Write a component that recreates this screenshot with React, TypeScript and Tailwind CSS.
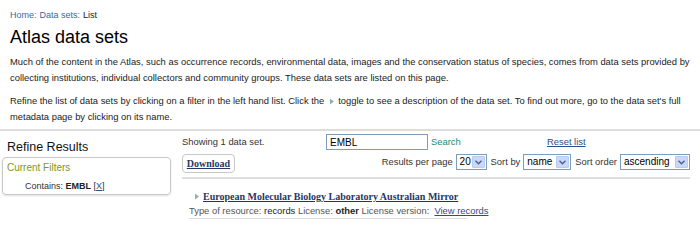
function FakeSelect({ value, width }: { value: string; width: string }) {
  return (
    <div className={`flex h-[16px] items-center justify-between border border-[#7f9db9] bg-white pl-[3px] pr-px ${width}`}>
      <span className="text-[10px] leading-none text-black">{value}</span>
      <span className="flex h-[12px] w-[13px] items-center justify-center rounded-[1px] border border-[#b8cbf0] bg-[#c9d8fa]">
        <svg width="7" height="5" viewBox="0 0 7 5">
          <path d="M0.5 0.8 L3.5 3.8 L6.5 0.8" fill="none" stroke="#4d6185" strokeWidth="1.4" />
        </svg>
      </span>
    </div>
  );
}

export default function App() {
  return (
    <div className="h-[250px] w-[700px] overflow-hidden bg-white font-['Liberation_Sans',Arial,sans-serif] text-[#222]">
      <div className="px-[10px]">
        <div className="pt-[9px] text-[9px] leading-[12px]">
          <span className="text-[#3d68a3]">Home</span>
          <span className="mr-[3px] text-[#777]">:</span>
          <span className="text-[#3d68a3]">Data sets</span>
          <span className="mr-[3px] text-[#777]">:</span>
          <span className="text-[#222]">List</span>
        </div>
        <h1 className="mt-[5px] text-[18px] leading-[22px] font-normal text-black">Atlas data sets</h1>
        <p className="mt-[6px] text-[9.4px] leading-[16px]">
          Much of the content in the Atlas, such as occurrence records, environmental data, images and the conservation status of species, comes from data sets provided by collecting institutions, individual collectors and community groups. These data sets are listed on this page.
        </p>
        <p className="mt-[7px] text-[9.4px] leading-[16px]">
          Refine the list of data sets by clicking on a filter in the left hand list. Click the
          <span className="ml-[5px] mr-[3px] inline-block align-middle">
            <svg width="6" height="7" viewBox="0 0 6 7" className="block">
              <path d="M1 0.5 L5 3.5 L1 6.5 Z" fill="#8fb3b3" />
            </svg>
          </span>
          toggle to see a description of the data set. To find out more, go to the data set's full metadata page by clicking on its name.
        </p>
      </div>
      <div className="mt-[4px] h-[2px] w-full bg-[#dddddd]" />
      <div className="flex">
        <div className="ml-[2px] w-[169px] pt-[8px]">
          <h2 className="pl-[5px] text-[12.5px] leading-[16px] text-[#111]">Refine Results</h2>
          <div className="mt-[2px] h-[38px] rounded-[4px] border border-[#c8c8c8] shadow-[0_1px_2px_rgba(0,0,0,0.12)]">
            <div className="pl-[4px] pt-[3px] text-[10px] leading-[14px] text-[#7c9a14]">Current Filters</div>
            <div className="mt-[4px] pl-[22px] text-[9px] leading-[14px] text-[#333]">
              Contains: <b className="text-[#222]">EMBL</b> <span className="text-[#333]">[</span>
              <span className="text-[#2a4d8f] underline">X</span>
              <span className="text-[#333]">]</span>
            </div>
          </div>
        </div>
        <div className="ml-[11px] w-[508px]">
          <div className="mt-[3px] flex h-[16px] items-center text-[9.4px]">
            <span className="w-[144px] text-[#333]">Showing 1 data set.</span>
            <div className="flex h-[16px] w-[102px] items-center border border-[#7f9db9] bg-white pl-[3px] text-[10px] text-black">EMBL</div>
            <span className="ml-[3px] w-[116px] text-[#1a8a7a]">Search</span>
            <span className="text-[#2a4d8f] underline">Reset list</span>
          </div>
          <div className="mt-[4px] flex items-start justify-between">
            <div className="flex h-[19px] w-[53px] items-center justify-center rounded-[4px] border border-[#c8c8c8] bg-white font-['Liberation_Serif',serif] text-[10px] font-bold text-[#1f3766] underline">
              Download
            </div>
            <div className="flex items-center gap-[3px] text-[9.4px] text-[#333]">
              <span>Results per page</span>
              <FakeSelect value="20" width="w-[31px]" />
              <span className="ml-[1px]">Sort by</span>
              <FakeSelect value="name" width="w-[48px]" />
              <span className="ml-[1px]">Sort order</span>
              <FakeSelect value="ascending" width="w-[70px]" />
            </div>
          </div>
          <div className="mt-[4px] h-[2px] w-full bg-[#dddddd]" />
          <div className="ml-[7px] w-[278px]">
            <div className="mt-[10px] flex h-[14px] items-center whitespace-nowrap pl-[5px]">
              <svg width="6" height="7" viewBox="0 0 6 7" className="mr-[3px] shrink-0">
                <path d="M1 0.5 L5 3.5 L1 6.5 Z" fill="#8fb3b3" />
              </svg>
              <span className="font-['Liberation_Serif',serif] text-[10px] font-bold text-[#1f3766] underline">
                European Molecular Biology Laboratory Australian Mirror
              </span>
            </div>
            <div className="mt-px flex h-[14px] items-center whitespace-nowrap text-[9.4px] text-[#555]">
              <span>Type of resource:&nbsp;</span>
              <span className="text-[#222]">records</span>
              <span>&nbsp;License:&nbsp;</span>
              <span className="font-bold text-[#222]">other</span>
              <span>&nbsp;License version:&nbsp;&nbsp;</span>
              <span className="text-[#2a4d8f] underline">View records</span>
            </div>
            <div className="h-px w-full bg-[#dddddd]" />
          </div>
        </div>
      </div>
    </div>
  );
}
